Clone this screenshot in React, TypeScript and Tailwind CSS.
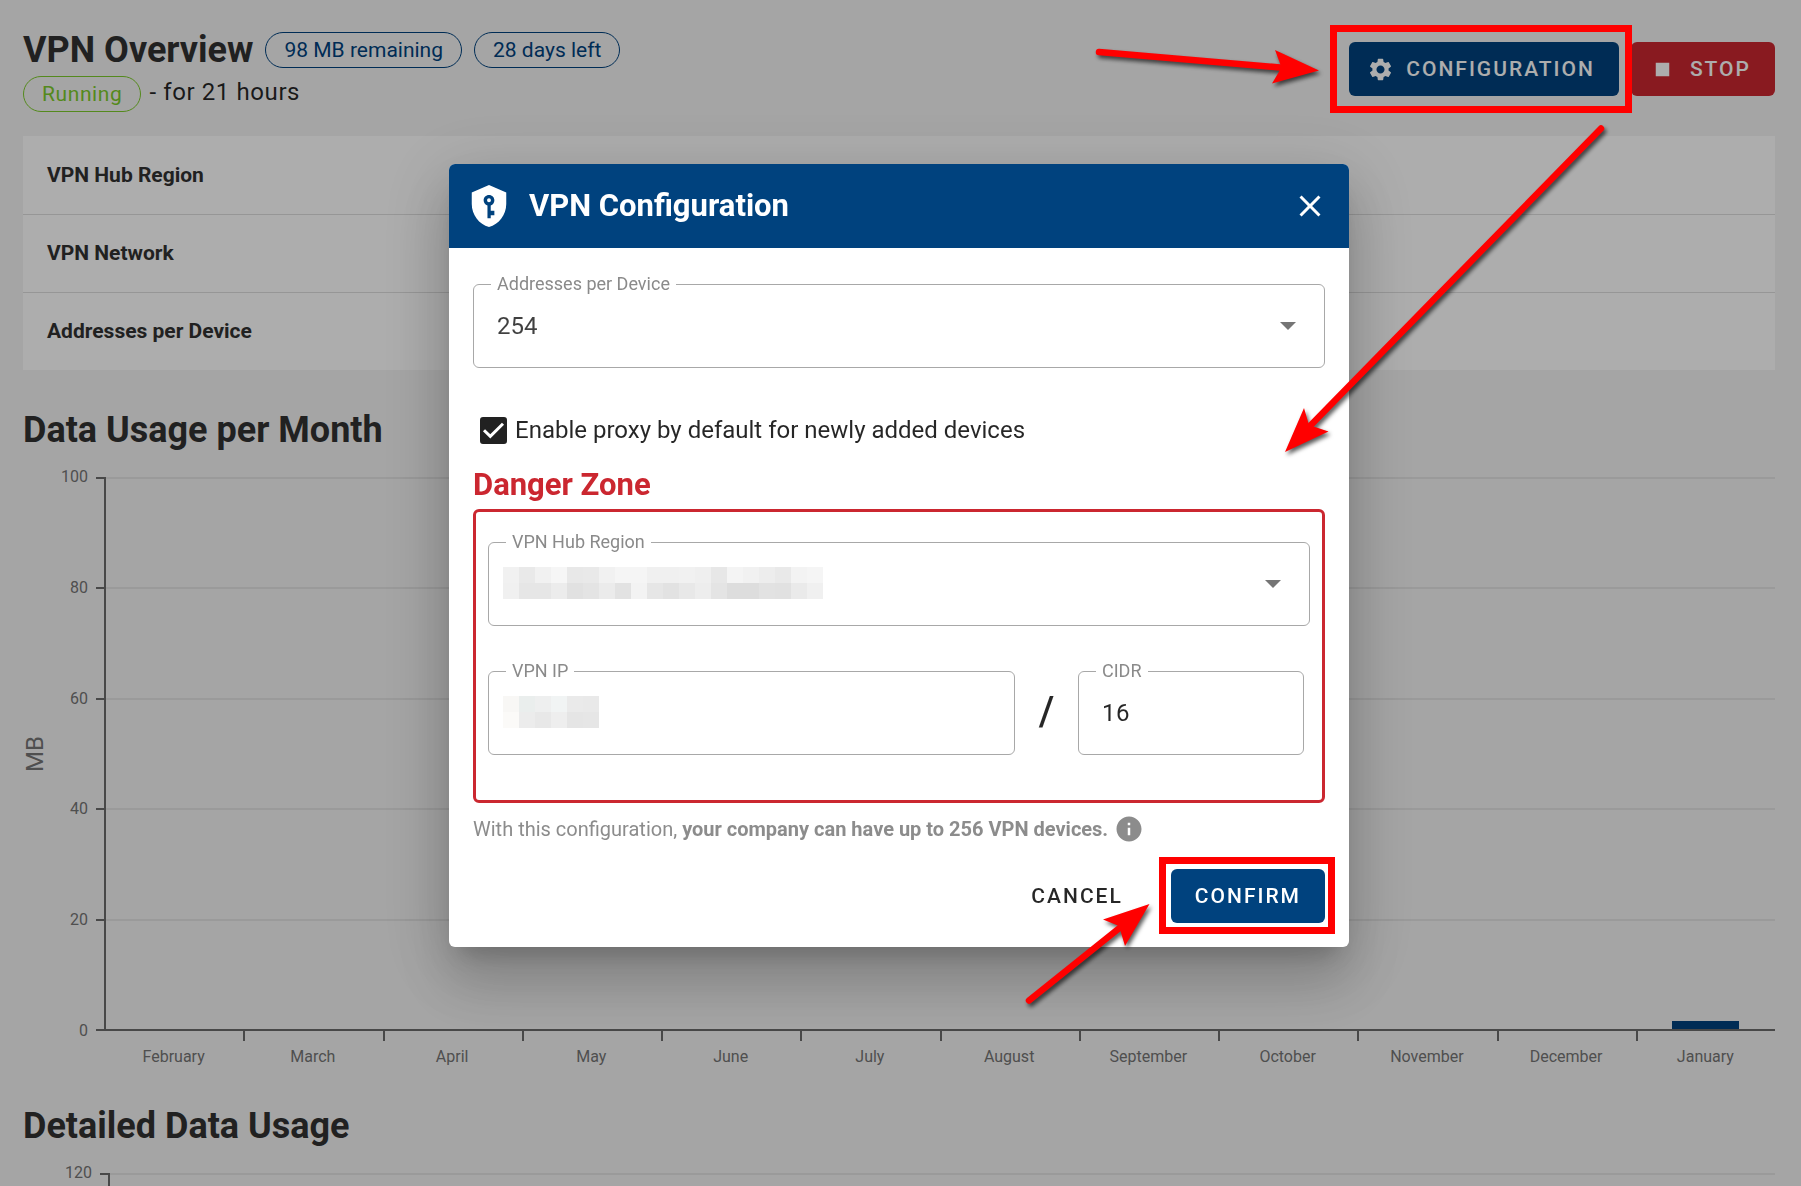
import { useState, type ReactNode } from "react";
import { MdClose, MdInfo, MdSettings, MdStop } from "react-icons/md";

const months = [
  "February",
  "March",
  "April",
  "May",
  "June",
  "July",
  "August",
  "September",
  "October",
  "November",
  "December",
  "January",
];

const usage = [0, 0, 0, 0, 0, 0, 0, 0, 0, 0, 0, 1.4];

const regionMask = [
  ["#f1f1f1", "#e9e9e9", "#f1f1f1", "#f6f6f6", "#e8e8e8", "#e9e9e9", "#f1f1f1", "#f5f5f5", "#f5f5f5", "#f0f0f0", "#f0f0f0", "#f1f1f1", "#efefef", "#e7e7e7", "#f4f4f4", "#f1f1f1", "#ededed", "#e9e9e9", "#f3f3f3", "#f5f5f5"],
  ["#f0f0f0", "#e6e6e6", "#e6e6e6", "#ececec", "#e1e1e1", "#e4e4e4", "#ebebeb", "#e2e2e2", "#f3f3f3", "#e6e6e6", "#e2e2e2", "#e8e8e8", "#ededed", "#e4e4e4", "#dddddd", "#dddddd", "#e2e2e2", "#e1e1e1", "#eaeaea", "#f0f0f0"],
];

const ipMask = [
  ["#f8f7f5", "#eaeeed", "#eeefef", "#f1f4f4", "#eaeaea", "#e9e9e9"],
  ["#fbfaf8", "#ececec", "#e8e8e8", "#eeeeee", "#e5e5e5", "#e6e6e6"],
];

function Mosaic({ rows }: { rows: string[][] }) {
  return (
    <div className="pointer-events-none absolute left-[14px] top-[15px]" aria-hidden="true">
      {rows.map((row, y) => (
        <div key={y} className="flex">
          {row.map((color, x) => (
            <span key={x} className="size-4" style={{ backgroundColor: color }} />
          ))}
        </div>
      ))}
    </div>
  );
}

function Badge({ tone, children }: { tone: "blue" | "green"; children: ReactNode }) {
  return (
    <span
      className={
        tone === "blue"
          ? "flex h-9 items-center rounded-full border border-[#00427e] px-[18px] text-[21px] leading-8 text-[#00427e]"
          : "flex h-9 items-center rounded-full border border-[#7dcb2b] px-[18px] text-[21px] leading-8 text-[#7dcb2b]"
      }
    >
      {children}
    </span>
  );
}

function Field({
  id,
  label,
  className,
  children,
}: {
  id: string;
  label: string;
  className?: string;
  children: ReactNode;
}) {
  return (
    <fieldset className={`min-w-0 rounded-md border border-[#a8a8a8] pb-[9px] ${className ?? ""}`}>
      <legend className="ml-[17px] flex px-[6px] text-lg leading-5 text-[#8a8a8a]">
        <label htmlFor={id}>{label}</label>
      </legend>
      <div className="relative flex h-16 items-center">{children}</div>
    </fieldset>
  );
}

function Caret() {
  return (
    <svg
      className="pointer-events-none absolute right-7 top-7"
      width="16"
      height="8"
      viewBox="0 0 16 8"
      fill="#757575"
      aria-hidden="true"
    >
      <path d="M0 0h16L8 8z" />
    </svg>
  );
}

function ShieldKey() {
  return (
    <svg className="size-[46px] shrink-0" viewBox="0 0 24 24" fill="#fff" aria-hidden="true">
      <path d="M12 8c.6 0 1 .4 1 1s-.4 1-1 1-1-.4-1-1 .4-1 1-1m9-3v6c0 5.500-3.800 10.700-9 12-5.200-1.300-9-6.500-9-12V5l9-4 9 4m-6.200 9.500h-1.900v-2.700c1.200-.4 1.900-1.500 1.900-2.800 0-1.600-1.200-2.800-2.800-2.800S9.200 7.400 9.200 9c0 1.300.8 2.400 2 2.800v6.600h1.700v-1.600h1.900v-2.300z" />
    </svg>
  );
}

function Chart({ labels }: { labels: string[] }) {
  return (
    <div className="grid h-[554px] grid-cols-[24px_49px_10px_1fr] text-base text-[#757575]">
      <div className="flex items-center justify-start">
        <span className="rotate-180 text-2xl leading-6 [writing-mode:vertical-rl]">MB</span>
      </div>
      <div className="flex flex-col justify-between">
        {labels.map((label) => (
          <span key={label} className="flex h-0 items-center justify-end pr-2">
            {label}
          </span>
        ))}
      </div>
      <div className="flex flex-col justify-between border-r-2 border-[#6a6a6a]">
        {labels.map((label) => (
          <span key={label} className="h-[2px] bg-[#6a6a6a]" />
        ))}
      </div>
      <div className="relative">
        <div className="flex h-full flex-col justify-between">
          {labels.map((label) => (
            <span
              key={label}
              className={label === "0" ? "h-[2px] bg-[#6a6a6a]" : "h-[2px] bg-[#e3e3e3]"}
            />
          ))}
        </div>
        <div className="absolute inset-x-0 bottom-[2px] top-0 flex items-end">
          {usage.map((value, i) => (
            <div key={months[i]} className="flex h-full flex-1 items-end justify-center">
              <div className="w-[67px] bg-[#00427e]" style={{ height: `${value}%` }} />
            </div>
          ))}
        </div>
      </div>
    </div>
  );
}

function MonthAxis() {
  return (
    <div>
      <div className="flex pl-[83px]" aria-hidden="true">
        {months.map((month) => (
          <span key={month} className="h-[10px] flex-1 border-r-2 border-[#6a6a6a] last:border-r-0" />
        ))}
      </div>
      <div className="flex pl-[81px] text-base leading-8 text-[#757575]">
        {months.map((month) => (
          <span key={month} className="flex-1 text-center">
            {month}
          </span>
        ))}
      </div>
    </div>
  );
}

/* Upper end of the detailed chart: top tick, its grid line and the start of the axis. */
function DetailedChartTop() {
  return (
    <div className="grid h-[554px] grid-cols-[77px_10px_1fr] text-base text-[#757575]">
      <span className="flex h-0 items-center justify-end pr-2">120</span>
      <span className="border-r-2 border-t-2 border-[#6a6a6a]" />
      <span className="border-t-2 border-[#e3e3e3]" />
    </div>
  );
}

function Arrow({ from, to, head }: { from: [number, number]; to: [number, number]; head: string }) {
  return (
    <g fill="#f00" stroke="#f00">
      <line x1={from[0]} y1={from[1]} x2={to[0]} y2={to[1]} strokeWidth="6.500" strokeLinecap="round" />
      <polygon points={head} stroke="none" />
    </g>
  );
}

function Annotations() {
  return (
    <svg className="pointer-events-none fixed inset-0 z-20 h-full w-full" aria-hidden="true">
      <rect x="1333.500" y="28.500" width="295" height="81" fill="none" stroke="#f00" strokeWidth="7" />
      <rect x="1162.500" y="860.500" width="169" height="70" fill="none" stroke="#f00" strokeWidth="7" />
      <g className="[filter:drop-shadow(2px_3px_2px_rgba(0,0,0,0.65))]">
        <Arrow from={[1099, 52]} to={[1286, 68]} head="1319,70.500 1275,50 1281.500,67.500 1272,83.500" />
        <Arrow from={[1601, 128.500]} to={[1309, 427]} head="1285,452 1304,408 1309,425 1328.500,431.500" />
        <Arrow from={[1029, 1000.500]} to={[1122, 926]} head="1149.500,904 1103,919.500 1119,926 1125,946" />
      </g>
    </svg>
  );
}

export default function App() {
  const [proxy, setProxy] = useState(true);

  return (
    <div className="h-screen overflow-hidden bg-[#f4f4f4] font-['Roboto',sans-serif] text-black/85">
      <main className="pl-[23px] pr-[26px] pt-8">
        <header className="flex items-start justify-between">
          <div>
            <div className="flex items-center gap-3">
              <h1 className="text-4xl font-bold leading-9 text-[#323232]">VPN Overview</h1>
              <Badge tone="blue">98 MB remaining</Badge>
              <Badge tone="blue">28 days left</Badge>
            </div>
            <div className="mt-2 flex items-start gap-2 text-2xl leading-8 tracking-wide">
              <Badge tone="green">Running</Badge>
              <span>- for 21 hours</span>
            </div>
          </div>
          <div className="mt-[10px] flex gap-3">
            <button className="flex h-[54px] items-center gap-3 rounded-md bg-[#00427e] pl-[18px] pr-6 text-[21px] font-medium leading-8 tracking-[2px] text-white">
              <MdSettings className="size-[27px]" />
              CONFIGURATION
            </button>
            <button className="flex h-[54px] items-center gap-[14px] rounded-md bg-[#cb2730] pl-[18px] pr-6 text-[21px] font-medium leading-8 tracking-[2px] text-white">
              <MdStop className="size-[27px]" />
              STOP
            </button>
          </div>
        </header>

        <table className="mt-6 w-full bg-white text-left">
          <tbody>
            {["VPN Hub Region", "VPN Network", "Addresses per Device"].map((name) => (
              <tr key={name} className="h-[78px] border-b border-[#dedede] last:border-b-0">
                <th scope="row" className="px-6 text-[21px] font-bold leading-6 text-[#323232]">
                  {name}
                </th>
              </tr>
            ))}
          </tbody>
        </table>

        <h2 className="mt-[38px] text-4xl font-bold leading-[44px] text-[#323232]">Data Usage per Month</h2>
        <section className="mt-[25px]">
          <Chart labels={["100", "80", "60", "40", "20", "0"]} />
          <MonthAxis />
        </section>

        <h2 className="mt-[31px] text-4xl font-bold leading-[44px] text-[#323232]">Detailed Data Usage</h2>
        <section className="mt-[25px]">
          <DetailedChartTop />
        </section>
      </main>

      <div className="fixed inset-0 z-10 flex items-start justify-center bg-black/32 pr-[3px] pt-[164px]">
        <div
          role="dialog"
          aria-modal="true"
          aria-labelledby="dialog-title"
          className="w-[900px] overflow-hidden rounded-md bg-white shadow-[0_17px_23px_-11px_rgba(0,0,0,0.2),0_36px_57px_5px_rgba(0,0,0,0.14),0_14px_69px_12px_rgba(0,0,0,0.12)]"
        >
          <div className="flex h-[84px] items-center bg-[#00427e] pl-[17px] pr-[21px] text-white">
            <ShieldKey />
            <h2 id="dialog-title" className="ml-[17px] flex-1 text-[31px] font-bold">
              VPN Configuration
            </h2>
            <button aria-label="Close">
              <MdClose className="size-9" />
            </button>
          </div>

          <form className="px-6 pb-6 pt-[26px]" onSubmit={(e) => e.preventDefault()}>
            <Field id="addresses" label="Addresses per Device">
              <select
                id="addresses"
                className="h-full w-full appearance-none bg-transparent px-[23px] text-2xl text-black/75"
              >
                <option>254</option>
              </select>
              <Caret />
            </Field>

            <label className="mt-[44px] flex h-9 items-center gap-2 pl-[7px] text-2xl leading-9">
              <span className="relative size-[27px]">
                <input
                  type="checkbox"
                  checked={proxy}
                  onChange={(e) => setProxy(e.target.checked)}
                  className="peer block size-[27px] appearance-none rounded-[3px] border-2 border-[#212121] checked:bg-[#212121]"
                />
                <svg
                  className="pointer-events-none absolute inset-0 hidden size-[27px] peer-checked:block"
                  viewBox="0 0 27 27"
                  fill="none"
                  stroke="#fff"
                  strokeWidth="3"
                  aria-hidden="true"
                >
                  <path d="M4 13.200l6.300 6.200L23 6.800" />
                </svg>
              </span>
              Enable proxy by default for newly added devices
            </label>

            <h3 className="mt-[17px] text-[31px] font-bold leading-10 text-[#cb2730]">Danger Zone</h3>
            <div className="mt-1 rounded-md border-[3px] border-[#cb2730] px-3 pb-[45px] pt-5">
              <Field id="region" label="VPN Hub Region">
                <select
                  id="region"
                  className="h-full w-full appearance-none bg-transparent px-[23px] text-2xl"
                >
                  <option></option>
                </select>
                <Mosaic rows={regionMask} />
                <Caret />
              </Field>
              <div className="mt-[35px] flex items-end pr-1.5">
                <Field id="ip" label="VPN IP" className="flex-1">
                  <input id="ip" className="h-full w-full bg-transparent px-[23px] text-2xl outline-none" />
                  <Mosaic rows={ipMask} />
                </Field>
                <span className="flex h-[86px] w-[63px] items-center justify-center text-[40px] font-medium">/</span>
                <Field id="cidr" label="CIDR" className="w-[226px]">
                  <input
                    id="cidr"
                    defaultValue="16"
                    className="h-full w-full bg-transparent px-[23px] text-2xl tracking-wide outline-none"
                  />
                </Field>
              </div>
            </div>

            <p className="mt-2 flex h-9 items-center text-xl text-[#8c8c8c]">
              <span>
                With this configuration, <b className="font-bold">your company can have up to 256 VPN devices.</b>
              </span>
              <MdInfo className="ml-[6px] size-[30px]" />
            </p>

            <div className="mt-[22px] flex justify-end gap-6">
              <button
                type="button"
                className="h-[54px] px-6 text-[21px] font-medium leading-8 tracking-[2px]"
              >
                CANCEL
              </button>
              <button
                type="submit"
                className="h-[54px] rounded-md bg-[#00427e] px-6 text-[21px] font-medium leading-8 tracking-[2px] text-white"
              >
                CONFIRM
              </button>
            </div>
          </form>
        </div>
      </div>

      <Annotations />
    </div>
  );
}
